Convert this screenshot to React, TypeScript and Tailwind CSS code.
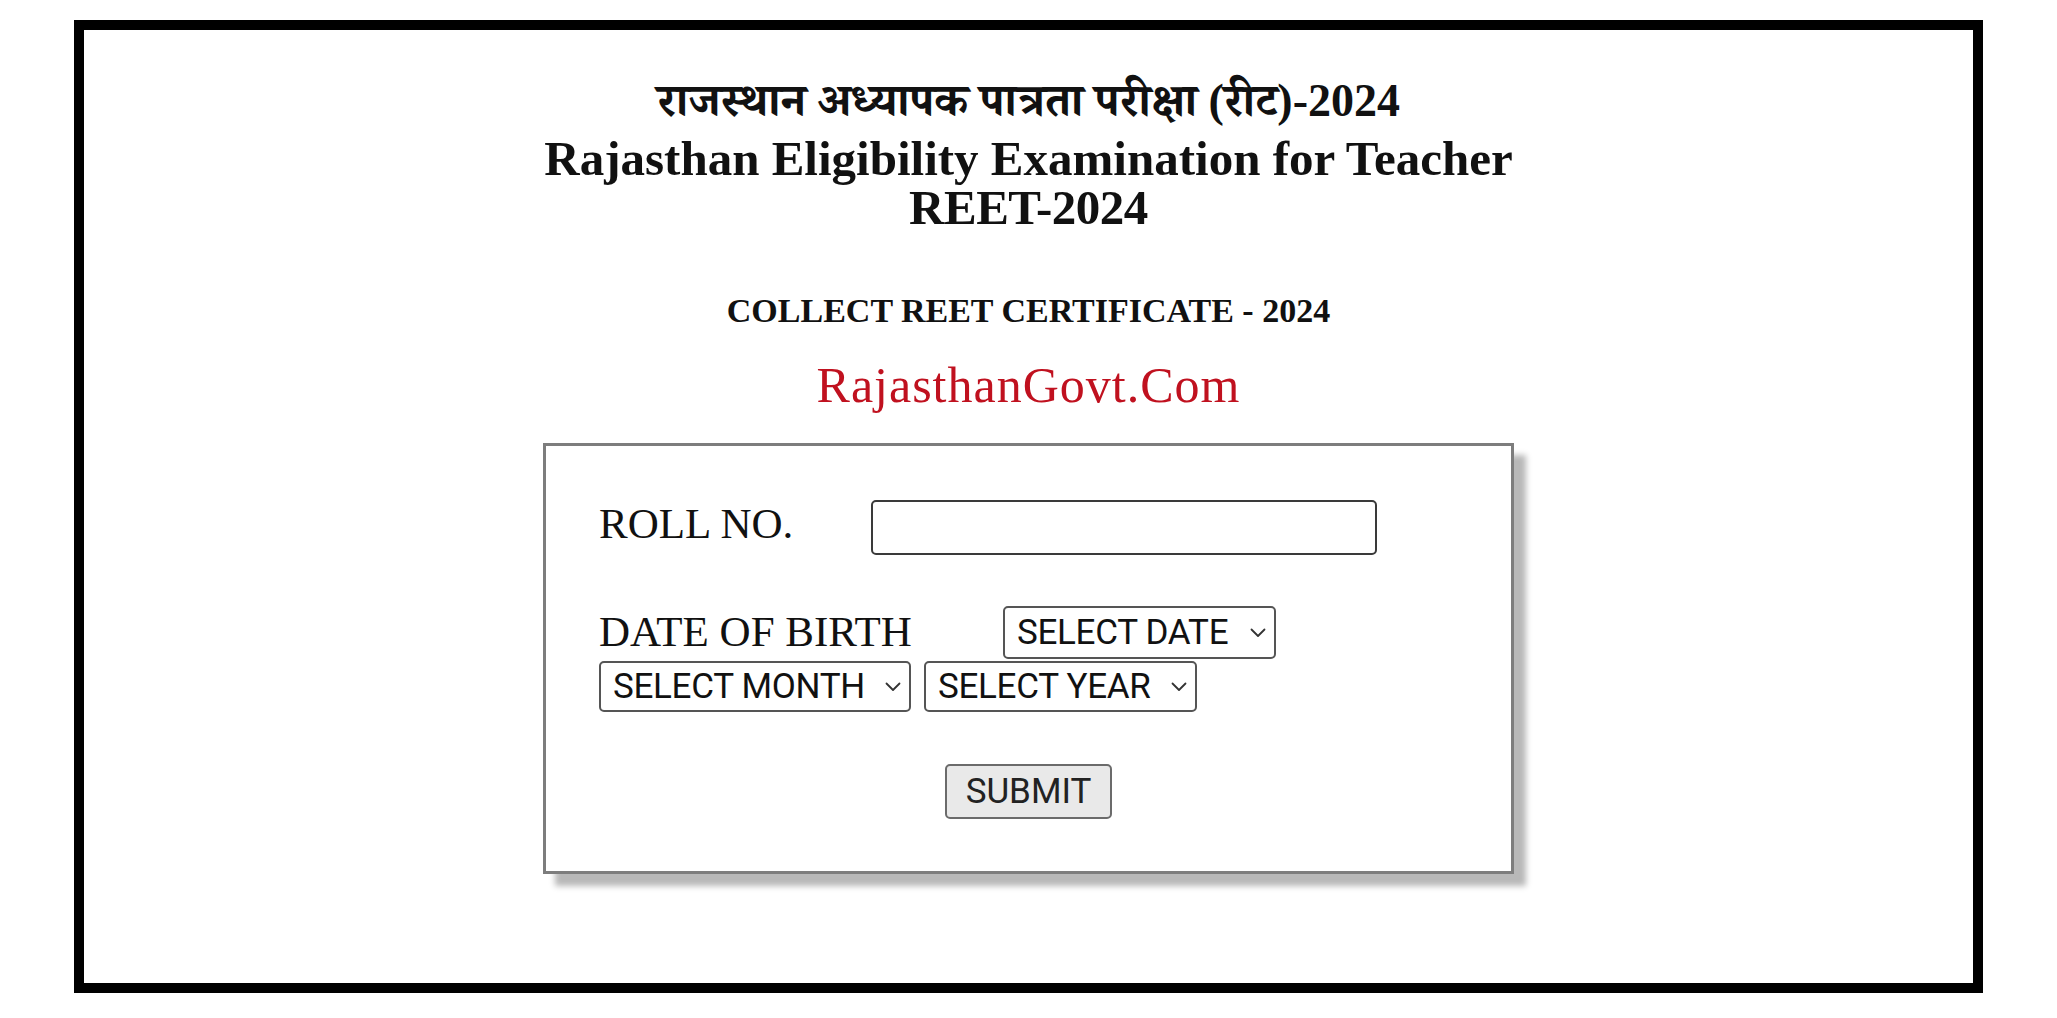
import { useState } from "react";

const serif = "font-['Liberation_Serif','Noto_Serif_Devanagari','Noto_Sans_Devanagari','Lohit_Devanagari',serif]";
const roboto = "font-['Roboto','Liberation_Sans',sans-serif]";

function Chevron() {
  return (
    <svg className="w-[16px] h-[10px] shrink-0" viewBox="0 0 16 10" fill="none" stroke="#333" strokeWidth={1.8}>
      <path d="M1.5 1.5l6.5 6.5 6.5-6.5" strokeLinecap="round" strokeLinejoin="round" />
    </svg>
  );
}

interface SelectBoxProps {
  label: string;
  width: string;
  height: string;
}

function SelectBox({ label, width, height }: SelectBoxProps) {
  return (
    <div
      className={`flex items-center justify-between ${width} ${height} pl-[12px] pr-[8px] bg-white border-2 border-[#555] rounded-[5px]`}
    >
      <select
        className={`appearance-none bg-transparent outline-none ${roboto} text-[35px] leading-none text-[#111] tracking-[-0.3px]`}
        defaultValue=""
      >
        <option value="">{label}</option>
      </select>
      <Chevron />
    </div>
  );
}

export default function App() {
  const [rollNo, setRollNo] = useState("");

  return (
    <div className="w-[2057px] h-[1018px] bg-white overflow-hidden">
      <div className="ml-[74px] mt-[20px] w-[1909px] h-[973px] border-[10px] border-black bg-white">
        <div className="flex flex-col items-center pt-[43px] text-[#111]">
          {/* Headings */}
          <h1 className={`${serif} font-bold text-[46px] leading-[56px]`}>
            राजस्थान अध्यापक पात्रता परीक्षा (रीट)-2024
          </h1>
          <h2 className={`${serif} font-bold text-[49px] leading-[49px] text-center mt-[5px]`}>
            Rajasthan Eligibility Examination for Teacher
            <br />
            <span className="tracking-[-0.5px]">REET-2024</span>
          </h2>
          <p className={`${serif} font-bold text-[34px] leading-[34px] mt-[62px]`}>
            COLLECT REET CERTIFICATE - 2024
          </p>
          <p className={`${serif} text-[50px] leading-[50px] tracking-[1px] text-[#c0111f] mt-[32px]`}>
            RajasthanGovt.Com
          </p>

          {/* Form box */}
          <div className="w-[971px] mt-[33px] bg-white border-[3px] border-[#7d7d7d] shadow-[12px_12px_6px_#b8b8b8] pl-[53px] pt-[54px] pb-[52px]">
            <div className="flex items-start">
              <label className={`${serif} text-[43px] leading-[43px] w-[272px] mt-[2px]`}>ROLL NO.</label>
              <input
                type="text"
                value={rollNo}
                onChange={(e) => setRollNo(e.target.value)}
                className="w-[506px] h-[55px] border-2 border-[#3a3a3a] rounded-[5px] bg-white px-2 text-[30px] outline-none"
              />
            </div>

            <div className="flex items-start mt-[51px]">
              <span className={`${serif} text-[43px] leading-[43px] w-[404px] mt-[4px]`}>DATE OF BIRTH</span>
              <SelectBox label="SELECT DATE" width="w-[273px]" height="h-[53px]" />
            </div>
            <div className="flex items-center gap-[13px] mt-[2px]">
              <SelectBox label="SELECT MONTH" width="w-[312px]" height="h-[51px]" />
              <SelectBox label="SELECT YEAR" width="w-[273px]" height="h-[51px]" />
            </div>

            <div className="flex justify-center mt-[52px] -ml-[53px]">
              <button
                type="button"
                className={`w-[167px] h-[55px] bg-[#e9e9e9] border-2 border-[#6b6b6b] rounded-[5px] ${roboto} text-[35px] leading-none text-[#222]`}
              >
                SUBMIT
              </button>
            </div>
          </div>
        </div>
      </div>
    </div>
  );
}
